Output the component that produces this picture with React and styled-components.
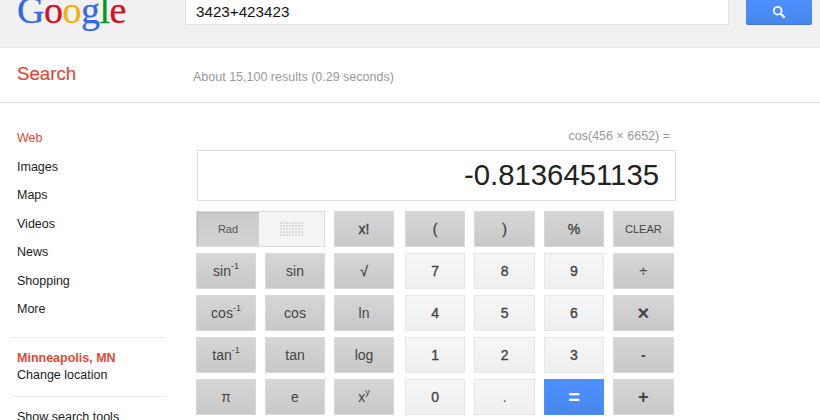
import React from 'react';
import styled, { createGlobalStyle } from 'styled-components';

const GlobalStyle = createGlobalStyle`
  html, body {
    margin: 0;
    padding: 0;
    background: #fff;
  }
  body {
    font-family: 'Liberation Sans', Arial, sans-serif;
    color: #222;
  }
`;

const Page = styled.div`
  width: 820px;
  height: 420px;
  overflow: hidden;
`;

const TopBar = styled.header`
  height: 47px;
  background: #f1f1f1;
  border-bottom: 1px solid #e8e8e8;
  display: flex;
  align-items: flex-start;
  overflow: hidden;
`;

const Logo = styled.div`
  width: 185px;
  flex: none;
  padding-left: 17px;
  box-sizing: border-box;
  margin-top: -13px;
  font-family: 'Liberation Serif', serif;
  font-size: 38px;
  line-height: 46px;
  letter-spacing: -0.5px;
  -webkit-text-stroke: 0.3px currentColor;
`;

const LogoLetter = styled.span`
  color: ${(p) => p.$c};
`;

const SearchInput = styled.div`
  width: 544px;
  height: 25px;
  box-sizing: border-box;
  background: #fff;
  border: 1px solid #e2e2e2;
  border-top: 0;
  padding-left: 10px;
  font-size: 15.2px;
  line-height: 24px;
  color: #111;
`;

const SearchButton = styled.div`
  margin-left: 17px;
  width: 66px;
  height: 25px;
  box-sizing: border-box;
  background: linear-gradient(#4d90fe, #4787ed);
  border-bottom: 1px solid #3f79d8;
  border-radius: 0 0 2px 2px;
  display: flex;
  align-items: center;
  justify-content: center;
`;

const SubBar = styled.div`
  height: 54px;
  border-bottom: 1px solid #e4e4e4;
  display: flex;
  align-items: center;
`;

const SubTitle = styled.div`
  width: 193px;
  box-sizing: border-box;
  padding-left: 17px;
  font-size: 18.7px;
  color: #dd4b39;
  margin-top: -2px;
  -webkit-text-stroke: 0.2px currentColor;
`;

const ResultStats = styled.div`
  font-size: 12.5px;
  color: #999;
  margin-top: 4px;
`;

const Main = styled.div`
  display: flex;
`;

const Sidebar = styled.nav`
  width: 155px;
  flex: none;
  margin-left: 11px;
  padding-top: 21px;
  font-size: 12.5px;
`;

const NavItem = styled.div`
  height: 28.5px;
  line-height: 28.5px;
  padding-left: 6px;
  color: ${(p) => (p.$active ? '#dd4b39' : '#222')};
`;

const Section = styled.div`
  margin-top: ${(p) => p.$top}px;
  padding: ${(p) => p.$pad} 0 0 6px;
  border-top: 1px solid #ececec;
  line-height: 17.5px;
`;

const City = styled.div`
  font-weight: bold;
  color: #dd4b39;
`;

const Calculator = styled.section`
  margin-left: 30px;
  width: 480px;
  padding-top: 25px;
`;

const Expression = styled.div`
  height: 22px;
  line-height: 16px;
  text-align: right;
  padding-right: 6px;
  font-size: 12.5px;
  color: #999;
`;

const Display = styled.div`
  margin-left: 1px;
  width: 479px;
  height: 51px;
  box-sizing: border-box;
  border: 1px solid #dedede;
  padding-right: 16px;
  text-align: right;
  font-size: 29.3px;
  line-height: 47px;
  color: #222;
`;

const Keypad = styled.div`
  margin-top: 10px;
  display: flex;
  gap: 11px;
`;

const KeyGroup = styled.div`
  display: grid;
  grid-template-columns: repeat(${(p) => p.$cols}, ${(p) => p.$width}px);
  grid-auto-rows: 36px;
  column-gap: 9px;
  row-gap: 6px;
`;

const keyColors = {
  dark: 'background: linear-gradient(#d6d6d6, #c8c8c8); border: 1px solid #d9d9d9; color: #444;',
  light: 'background: linear-gradient(#f6f6f6, #efefef); border: 1px solid #e6e6e6; color: #444;',
  blue: 'background: linear-gradient(#4d90fe, #4787ed); border: 1px solid #4d90fe; color: #fff;',
};

const Key = styled.div`
  ${(p) => keyColors[p.$kind]}
  box-sizing: border-box;
  display: flex;
  align-items: center;
  justify-content: center;
  font-size: ${(p) => p.$size || 14}px;
  font-weight: ${(p) => (p.$weight === 2 ? 'bold' : 'normal')};
  -webkit-text-stroke: ${(p) => (p.$weight === 1 ? '0.35px currentColor' : '0')};

  sup {
    font-size: 9px;
    line-height: 0;
    position: relative;
    top: -5px;
  }
`;

const ModeSwitch = styled.div`
  grid-column: span 2;
  display: flex;
  box-sizing: border-box;
  border: 1px solid #dcdcdc;
`;

const ModePart = styled.div`
  display: flex;
  align-items: center;
  justify-content: center;
  font-size: 11px;
  color: #555;
  width: ${(p) => (p.$on ? '62px' : 'auto')};
  flex: ${(p) => (p.$on ? 'none' : 1)};
  background: ${(p) => (p.$on ? 'linear-gradient(#cbcbcb, #d2d2d2)' : '#f4f4f4')};
  box-shadow: ${(p) => (p.$on ? 'inset 1px 1px 1px #bbb' : 'none')};
`;

const DotGrid = styled.div`
  display: grid;
  grid-template-columns: repeat(8, 2px);
  grid-auto-rows: 2px;
  gap: 1px;
`;

const Dot = styled.i`
  background: #dcdcdc;
`;

const functionKeys = [
  ['sin', '-1'], ['sin'], ['√', null, 1],
  ['cos', '-1'], ['cos'], ['ln'],
  ['tan', '-1'], ['tan'], ['log'],
  ['π'], ['e'], ['x', 'y'],
];

const numberKeys = [
  ['(', 'dark', 1], [')', 'dark', 1], ['%', 'dark', 1], ['CLEAR', 'dark', 0, 11],
  ['7', 'light', 1], ['8', 'light', 1], ['9', 'light', 1], ['÷', 'dark', 1],
  ['4', 'light', 1], ['5', 'light', 1], ['6', 'light', 1], ['×', 'dark', 2, 20],
  ['1', 'light', 1], ['2', 'light', 1], ['3', 'light', 1], ['-', 'dark', 2],
  ['0', 'light', 1], ['.', 'light', 0], ['=', 'blue', 2, 20], ['+', 'dark', 2, 18],
];

const navItems = ['Images', 'Maps', 'Videos', 'News', 'Shopping', 'More'];
const logoLetters = [['G', '#3369e8'], ['o', '#d50f25'], ['o', '#eeb211'], ['g', '#3369e8'], ['l', '#009925'], ['e', '#d50f25']];

export default function App() {
  return (
    <Page>
      <GlobalStyle />
      <TopBar>
        <Logo>
          {logoLetters.map(([ch, c], i) => (
            <LogoLetter key={i} $c={c}>{ch}</LogoLetter>
          ))}
        </Logo>
        <SearchInput>3423+423423</SearchInput>
        <SearchButton>
          <svg width="14" height="14" viewBox="0 0 14 14" fill="none" stroke="#fff">
            <circle cx="5.7" cy="5.7" r="3.9" strokeWidth="1.8" />
            <path d="M8.7 8.7 L12.6 12.6" strokeWidth="2.2" />
          </svg>
        </SearchButton>
      </TopBar>

      <SubBar>
        <SubTitle>Search</SubTitle>
        <ResultStats>About 15,100 results (0.29 seconds)</ResultStats>
      </SubBar>

      <Main>
        <Sidebar>
          <NavItem $active>Web</NavItem>
          {navItems.map((n) => (
            <NavItem key={n}>{n}</NavItem>
          ))}
          <Section $top={13} $pad="12px">
            <City>Minneapolis, MN</City>
            <div>Change location</div>
          </Section>
          <Section $top={11} $pad="12px">Show search tools</Section>
        </Sidebar>

        <Calculator>
          <Expression>cos(456 × 6652) =</Expression>
          <Display>-0.8136451135</Display>
          <Keypad>
            <KeyGroup $cols={3} $width={60}>
              <ModeSwitch>
                <ModePart $on>Rad</ModePart>
                <ModePart>
                  <DotGrid>
                    {Array.from({ length: 40 }, (_, i) => <Dot key={i} />)}
                  </DotGrid>
                </ModePart>
              </ModeSwitch>
              <Key $kind="dark" $weight={1}>x!</Key>
              {functionKeys.map(([label, sup, weight], i) => (
                <Key key={i} $kind="dark" $weight={weight}>
                  {label}
                  {sup && <sup>{sup}</sup>}
                </Key>
              ))}
            </KeyGroup>
            <KeyGroup $cols={4} $width={60.4}>
              {numberKeys.map(([label, kind, weight, size], i) => (
                <Key key={i} $kind={kind} $weight={weight} $size={size}>
                  {label}
                </Key>
              ))}
            </KeyGroup>
          </Keypad>
        </Calculator>
      </Main>
    </Page>
  );
}
